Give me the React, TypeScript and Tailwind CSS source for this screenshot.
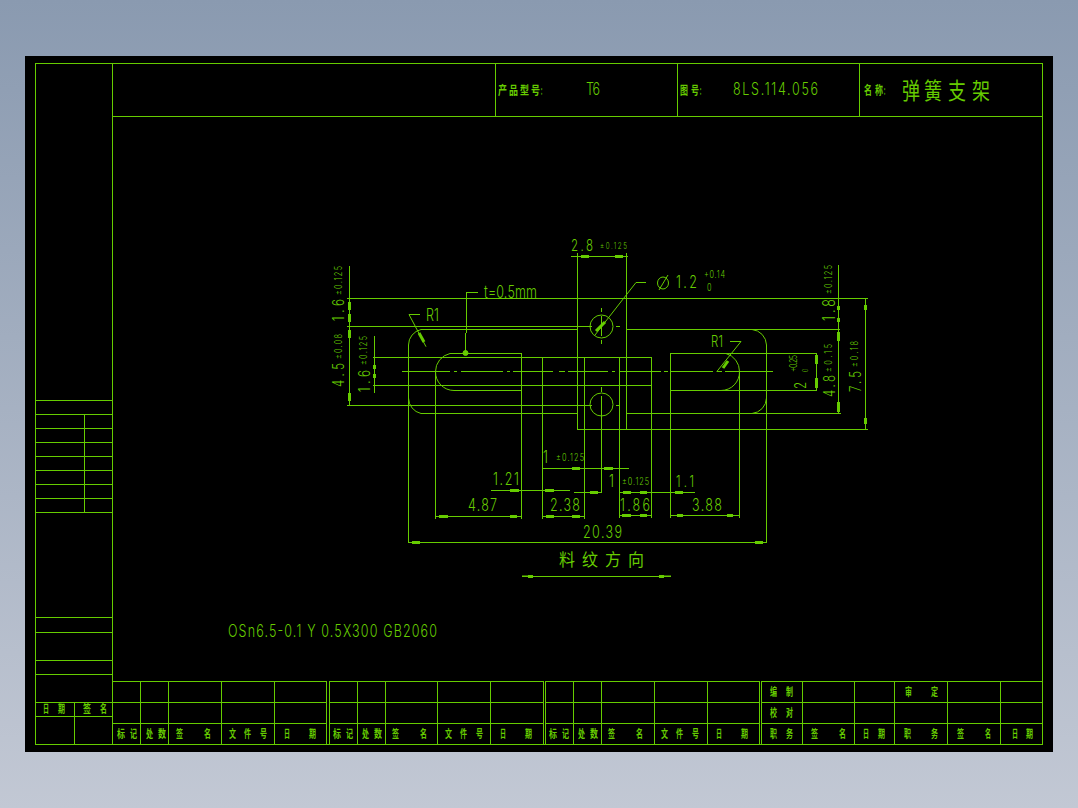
const px = (n: number) => Math.floor(n) + 0.5;
const squeeze = 0.75;

// horizontal rules: [y, x1, x2]
const hLines: number[][] = [
  // sheet frame + header
  [63, 35, 1043], [744, 35, 1043], [116, 112, 1043],
  // left column
  [400, 35, 112], [414, 35, 112], [428, 35, 112], [442, 35, 112], [456, 35, 112], [470, 35, 112],
  [484, 35, 112], [498, 35, 112], [512, 35, 112], [617, 35, 112], [632, 35, 112], [660, 35, 112],
  [674, 35, 112], [702, 35, 112], [716, 35, 112],
  // title block rows
  [681, 112, 327], [702, 112, 327], [723, 112, 327],
  [681, 329, 544], [702, 329, 544], [723, 329, 544],
  [681, 545, 760], [702, 545, 760], [723, 545, 760],
  [681, 761, 1043], [702, 761, 1043], [723, 761, 1043],
  // part
  [298, 347, 868], [326, 347, 592], [329, 421, 577], [329, 627, 840], [413, 421, 577], [413, 627, 841],
  [429, 577, 868], [357, 373, 652], [385, 373, 652], [405, 347, 592], [353, 450, 522], [390, 454, 522],
  [353, 670, 817], [390, 670, 817],
  // dimension lines
  [256, 571, 628], [516, 435, 522], [516, 542, 585], [515, 619, 652], [515, 670, 740], [542, 408, 767],
  [490, 491, 570], [468, 542, 629], [492, 574, 602], [492, 619, 695], [576, 522, 671],
];

// vertical rules: [x, y1, y2]
const vLines: number[][] = [
  [35, 63, 744], [112, 63, 744], [1042, 63, 744], [495, 63, 116], [677, 63, 116], [859, 63, 116],
  [84, 414, 512], [74, 702, 744],
  // title block columns
  ...[140, 168, 221, 274, 326, 329, 357, 385, 437, 490, 543, 545, 573, 601, 654, 707, 759, 761, 802, 854, 894, 947, 1000].map(
    (x) => [x, 681, 744],
  ),
  // part
  [408, 345, 543], [766, 345, 543], [577, 253, 429], [626, 253, 429], [435, 371, 517], [521, 353, 517],
  [542, 357, 517], [584, 357, 517], [619, 357, 517], [651, 357, 517], [670, 353, 517], [739, 371, 517],
  [601, 430, 493], [466, 292, 333], [465, 333, 353],
  // dimension lines
  [349, 266, 406], [374, 336, 393], [838, 265, 413], [816, 353, 391], [865, 298, 430],
  // dimension ticks
  [435, 513, 519], [521, 513, 519], [542, 513, 519], [584, 513, 519], [619, 512, 518], [651, 512, 518], [670, 512, 518],
  [739, 512, 518],
  // centre marks
  [601, 308, 312], [601, 316, 336], [601, 340, 344], [601, 387, 392], [601, 396, 440],
];

// centre line dashes: [y, x1, x2]
const dashes: number[][] = [
  [371, 402, 450], [371, 454, 457], [371, 461, 503], [371, 507, 510], [371, 513, 553], [371, 559, 565], [371, 568, 608],
  [371, 612, 615], [371, 619, 661], [371, 664, 668], [371, 671, 713], [371, 717, 722], [371, 725, 773],
  [326, 616, 620], [405, 616, 620],
];

// arrow blobs: [x, y, w, h]
const blobs: number[][] = [
  [581, 255, 8, 3], [615, 255, 8, 3], [439, 515, 9, 3], [510, 515, 7, 3], [546, 515, 8, 3], [572, 515, 8, 3],
  [622, 514, 9, 3], [640, 514, 7, 3], [677, 514, 6, 3], [727, 514, 6, 3], [412, 541, 8, 3], [755, 541, 8, 3],
  [510, 489, 9, 3], [545, 489, 9, 3], [572, 467, 8, 3], [604, 467, 9, 3], [590, 491, 8, 3], [623, 491, 8, 3],
  [640, 491, 7, 3], [675, 491, 8, 3], [528, 575, 5, 3], [659, 575, 5, 3],
  [348, 302, 3, 8], [348, 314, 3, 8], [348, 330, 3, 8], [348, 393, 3, 8], [373, 365, 3, 4], [373, 374, 3, 4],
  [837, 306, 3, 4], [837, 318, 3, 4], [837, 332, 3, 9], [837, 402, 3, 10], [815, 355, 3, 9], [815, 378, 3, 10],
  [864, 305, 3, 5], [864, 418, 3, 6],
];

// latin text: [x, baseline, width, height, string]
const labels: [number, number, number, number, string][] = [
  [586, 95, 14, 12, "T6"], [733, 95, 85, 12, "8LS.114.056"], [228, 637, 209, 12, "OSn6.5-0.1 Y 0.5X300 GB2060"],
  [468, 511, 29, 12, "4.87"], [550, 511, 30, 12, "2.38"], [620, 511, 30, 12, "1.86"], [692, 511, 30, 12, "3.88"],
  [583, 538, 39, 12, "20.39"], [493, 485, 26, 12, "1.21"], [676, 487, 18, 11, "1.1"],
  [543, 463, 4, 12, "1"], [609, 487, 4, 12, "1"], [556, 461, 28, 7, "±0.125"], [622, 485, 27, 7, "±0.125"],
  [426, 321, 13, 12, "R1"], [711, 347, 12, 11, "R1"], [484, 298, 53, 12, "t=0.5mm"],
  [571, 251, 22, 11, "2.8"], [600, 249, 27, 6, "±0.125"], [676, 288, 21, 12, "1.2"], [704, 278, 21, 7, "+0.14"],
  [707, 291, 5, 7, "0"],
];

// rotated text: [baseline x, start y, length, height, string]
const sideLabels: [number, number, number, number, string][] = [
  [344, 321, 22, 11, "1.6"], [342, 295, 29, 7, "±0.125"], [344, 387, 24, 11, "4.5"], [342, 359, 25, 7, "±0.08"],
  [370, 392, 22, 11, "1.6"], [367, 365, 29, 7, "±0.125"], [835, 321, 22, 12, "1.8"], [832, 294, 29, 7, "±0.125"],
  [835, 397, 22, 11, "4.8"], [832, 372, 28, 7, "±0.15"], [806, 389, 7, 11, "2"], [797, 372, 17, 7, "+0.25"],
  [808, 372, 5, 5, "0"], [861, 392, 21, 11, "7.5"], [858, 367, 26, 7, "±0.18"],
];

// cjk glyphs: [x, baseline, width, height, char]
const han: [number, number, number, number, string][] = [
  [498, 96, 9, 12, "产"], [509, 96, 9, 12, "品"], [520, 96, 9, 12, "型"], [531, 96, 9, 12, "号"], [541, 96, 4, 12, ":"],
  [680, 96, 8, 12, "图"], [691, 96, 8, 12, "号"], [700, 96, 4, 12, ":"],
  [864, 96, 8, 12, "名"], [875, 96, 8, 12, "称"], [884, 96, 4, 12, ":"],
  [902, 100, 18, 23, "弹"], [924, 100, 18, 23, "簧"], [948, 100, 18, 23, "支"], [972, 100, 18, 23, "架"],
  [559, 567, 16, 17, "料"], [582, 567, 16, 17, "纹"], [605, 567, 16, 17, "方"], [628, 567, 16, 17, "向"],
  [43, 714, 6, 11, "日"], [58, 714, 7, 11, "期"], [83, 714, 8, 11, "签"], [100, 714, 7, 11, "名"],
  [770, 697, 7, 11, "编"], [786, 697, 7, 11, "制"], [905, 697, 7, 11, "审"], [931, 697, 7, 11, "定"],
  [770, 718, 7, 11, "校"], [786, 718, 7, 11, "对"],
  [770, 739, 7, 11, "职"], [786, 739, 7, 11, "务"], [811, 739, 7, 11, "签"], [839, 739, 7, 11, "名"],
  [863, 739, 6, 11, "日"], [878, 739, 7, 11, "期"], [904, 739, 7, 11, "职"], [931, 739, 7, 11, "务"],
  [957, 739, 7, 11, "签"], [985, 739, 6, 11, "名"], [1012, 739, 6, 11, "日"], [1026, 739, 7, 11, "期"],
];

// the same footer cells repeat three times
const footer: [number, number, string][] = [
  [117, 8, "标"], [130, 7, "记"], [146, 7, "处"], [158, 8, "数"], [176, 7, "签"], [204, 7, "名"],
  [229, 7, "文"], [244, 7, "件"], [260, 7, "号"], [284, 6, "日"], [309, 7, "期"],
];
for (const shift of [0, 216, 432]) {
  for (const [x, w, c] of footer) han.push([x + shift, 739, w, 11, c]);
}

const straight = (rows: number[][], vertical: boolean) =>
  rows
    .map(([a, b, c]) => (vertical ? `M${px(a)} ${b}V${c}` : `M${b} ${px(a)}H${c}`))
    .join("");

function Drawing() {
  return (
    <svg viewBox="25 56 1028 696" className="block h-[696px] w-[1028px] fill-none stroke-[#66cc00]">
      <path d={straight(hLines, false) + straight(vLines, true) + straight(dashes, false)} shapeRendering="crispEdges" />

      {/* outline corners and slot ends */}
      <path d="M408.5 345A16 16 0 0 1 421 329.5M408.5 398A16 16 0 0 0 421 413.5M752 329.5A16 16 0 0 1 766.5 345M766.5 398A16 16 0 0 1 752 413.5" />
      <path d="M450 353.5A18.5 18.5 0 0 0 435.5 371.5A18.5 18.5 0 0 0 454 390.5M726 353.5A18.5 18.5 0 0 1 739.5 371.5A18.5 18.5 0 0 1 721 390.5" />
      <circle cx="601.5" cy="326.5" r="11.5" />
      <circle cx="601.5" cy="404.5" r="11.5" />

      {/* leaders */}
      <path d="M420 314.5H409L426 346.7M646 282.5H636L595 335M730 341.5H741L716.7 371.7M478 292.5H466M522 576H528M664 576H671" />
      <path d="M419 333L424 342M596 331L605 322M723 368L728 361" strokeWidth={3} />
      <circle cx="465.5" cy="353" r="2.5" className="fill-[#66cc00]" />
      <ellipse cx="663" cy="283" rx="5.5" ry="6" />
      <path d="M659 290L668 275" />

      <g className="fill-[#66cc00] stroke-none">
        {blobs.map(([x, y, w, h]) => (
          <rect key={`${x}-${y}`} x={x} y={y} width={w} height={h} />
        ))}
      </g>

      <g className="fill-[#66cc00] stroke-none font-['Inter',sans-serif] font-light">
        {labels.map(([x, y, w, h, s]) => (
          <text
            key={`${x}-${y}`}
            transform={`translate(${x} ${y}) scale(${squeeze} 1)`}
            fontSize={h / 0.72}
            textLength={w / squeeze}
            lengthAdjust="spacing"
          >
            {s}
          </text>
        ))}
        {sideLabels.map(([x, y, w, h, s]) => (
          <text
            key={`${x}-${y}`}
            transform={`translate(${x} ${y}) rotate(-90) scale(${squeeze} 1)`}
            fontSize={h / 0.72}
            textLength={w / squeeze}
            lengthAdjust="spacing"
          >
            {s}
          </text>
        ))}
      </g>

      <g className="fill-[#66cc00] stroke-none font-['Noto_Sans_CJK_SC','Noto_Sans_CJK_JP',sans-serif]">
        {han.map(([x, y, w, h, c]) => (
          <text
            key={`${x}-${y}`}
            transform={`translate(${x} ${y - 1}) scale(${w / h} 1)`}
            fontSize={h}
            fontWeight={h < 13 ? 700 : 400}
          >
            {c}
          </text>
        ))}
      </g>
    </svg>
  );
}

export default function App() {
  return (
    <div className="h-[808px] w-[1078px] overflow-hidden bg-linear-to-b from-[#8a9ab0] to-[#c2c8d4] pl-[25px] pt-[56px]">
      <div className="h-[696px] w-[1028px] bg-black">
        <Drawing />
      </div>
    </div>
  );
}
